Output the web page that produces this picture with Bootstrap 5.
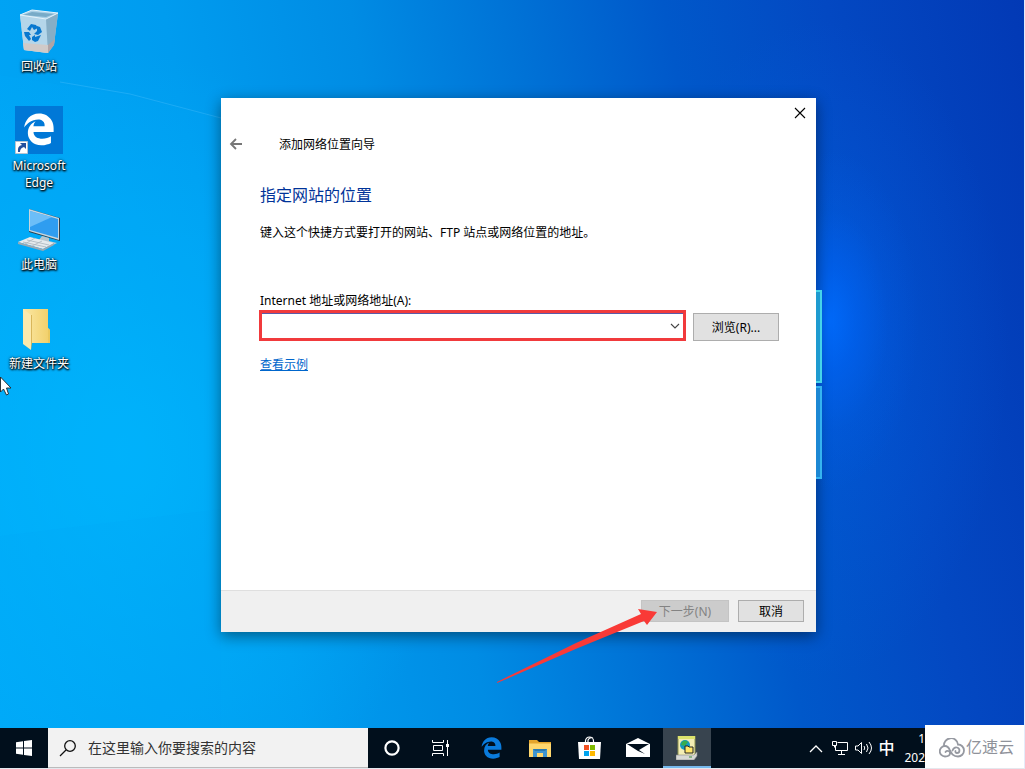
<!DOCTYPE html>
<html lang="zh-CN">
<head>
<meta charset="utf-8">
<meta name="viewport" content="width=device-width, initial-scale=1">
<title>添加网络位置向导</title>
<link href="https://cdn.jsdelivr.net/npm/bootstrap@5.3.0/dist/css/bootstrap.min.css" rel="stylesheet">
<style>
  body {
    font-family: "Noto Sans", "Noto Sans CJK SC", sans-serif;
    font-size: 12px;
    line-height: 17px;
    color: #000;
    border-right: 1px solid #e4ecfa;
    border-bottom: 1px solid #e4e8ee;
    background: #0078d7;
  }
  .wallpaper {
    background:
      radial-gradient(ellipse 90px 170px at 81% 44%, rgba(0, 108, 255, .85), rgba(0, 102, 250, .55) 30%, rgba(0, 98, 240, .18) 65%, transparent),
      radial-gradient(ellipse 190px 330px at 80% 48%, rgba(0, 98, 230, .45), transparent),
      radial-gradient(ellipse 340px 400px at 12% 62%, rgba(0, 186, 255, .7), transparent),
      linear-gradient(79deg, #00a9f8 0%, #009cef 26%, #008ce4 42%, #0072d6 56%, #0058ca 69%, #0348c2 83%, #0239b5 100%);
  }
  .wallpaper-beams { z-index: 0; }
  .desktop-icons { width: 78px; padding-top: 7px; z-index: 1; }
  .desktop-icon {
    min-height: 99px;
    color: #fff;
    text-decoration: none;
    text-shadow: 1px 1px 2px #000, 0 1px 2px #000, 0 0 3px rgba(0, 0, 0, .7);
  }
  .desktop-icon:hover { color: #fff; }
  .desktop-icon svg { margin-bottom: 3px; flex: none; }
  .pointer { left: 0; top: 376px; z-index: 3; }
  .window-area { padding: 98px 208px 96px 143px; }
  .wizard { background: #fff; box-shadow: 0 4px 14px rgba(0, 0, 0, .45); min-height: 534px; }
  .btn-plain { border: 0; background: transparent; padding: 0; line-height: 1; }
  .btn-close-window { width: 32px; height: 30px; }
  .btn-back { width: 30px; height: 32px; }
  .wizard-title { margin-left: 28px; }
  .wizard-body { padding: 24px 37px 0 39px; }
  .wizard-heading { font-size: 16px; line-height: 22px; color: #003399; margin-bottom: 18px; }
  .wizard-intro { margin-bottom: 51px; }
  .address-row { gap: 7px; margin: 1px 0 15px; }
  .address-box {
    height: 31px;
    font-size: 12px;
    padding: 0 24px 0 6px;
    margin-left: -1px;
    border: 3px solid #f13a3c;
    border-radius: 0;
    box-shadow: inset 0 1px 0 #5a5aa8;
    background-position: right 1px center;
    background-size: 14px 14px;
    background-image: url("data:image/svg+xml,%3Csvg xmlns='http://www.w3.org/2000/svg' viewBox='0 0 14 14'%3E%3Cpath d='M3 5l4 4 4-4' fill='none' stroke='%23444' stroke-width='1.1'/%3E%3C/svg%3E");
  }
  .btn-win {
    font-size: 12px;
    line-height: 17px;
    padding: 0;
    border: 1px solid #adadad;
    border-radius: 0;
    background: #e1e1e1;
    color: #000;
  }
  .btn-win:disabled { background: #ccc; border-color: #c4c4c4; color: #838383; opacity: 1; }
  .btn-browse { width: 86px; height: 28px; margin-top: 3px; flex: none; }
  .btn-next { width: 88px; height: 22px; }
  .btn-cancel { width: 66px; height: 22px; }
  .example-link { color: #0066cc; }
  .wizard-footer { background: #f0f0f0; border-top: 1px solid #dfdfdf; padding: 9px 12px 10px; gap: 9px; }
  .hint-arrow { left: -145px; top: 9px; z-index: 4; pointer-events: none; }
  .wall-panes { left: 100%; top: 192px; width: 6px; gap: 3px; }
  .wall-pane { height: 93px; border: 2px solid #45d4ea; border-left: 0; background: #1e9bd0; }
  .wall-pane + .wall-pane { border-color: #35b4f0; background: #1c88d4; }
  .taskbar { background: #010f1c; min-height: 40px; color: #fff; }
  .task-btn { width: 48px; display: flex; align-items: center; justify-content: center; }
  .task-active { background: #38444f; box-shadow: inset 0 -2px 0 #76b9ed; }
  .search-box { width: 320px; background: #f2f2f2; border-bottom: 1px solid #bbb; padding-left: 11px; gap: 11px; }
  .search-box input, .search-box input:focus { border: 0; border-radius: 0; background: transparent; padding: 0; font-size: 14px; box-shadow: none; }
  .search-box input::placeholder { color: #333; opacity: 1; }
  .app-buttons { gap: 1px; margin-left: 3px; }
  .tray { padding-right: 99px; }
  .tray .btn-plain { width: 24px; color: #fff; display: flex; align-items: center; justify-content: center; }
  .tray .ime { width: 21px; font-size: 16px; font-weight: 500; }
  .tray-clock { width: 28px; line-height: 19px; text-align: right; }
  .brand-mark { width: 99px; height: 43px; background: #fff; color: #8f929a; font-size: 16px; gap: 1px; z-index: 5; padding: 2px 0 0 4px; }
</style>
</head>
<body class="min-vh-100 d-flex flex-column overflow-hidden">

<main class="wallpaper position-relative flex-grow-1 d-flex">
  <svg class="wallpaper-beams position-absolute top-0 start-0 w-100 h-100" viewBox="0 0 1024 728" preserveAspectRatio="none" aria-hidden="true">
    <path d="M0 75 130 96 221 118V728H0z" fill="#00b4ff" opacity=".1"/>
    <path d="M0 536 221 509V728H0z" fill="#0090e8" opacity=".05"/>
    <path d="M60 82 130 94 221 118" fill="none" stroke="#5cc8ff" opacity=".3"/>
  </svg>

  <nav class="desktop-icons position-relative d-flex flex-column flex-shrink-0" aria-label="桌面">
    <a class="desktop-icon d-flex flex-column align-items-center text-center" href="#recycle">
      <svg width="48" height="48" viewBox="0 0 48 48" aria-hidden="true">
        <path d="M5 8 17 3l26 3-4 31-6 9-24-3z" fill="#a8cfe6"/>
        <path d="M5 8 31 12 33 46 9 43z" fill="#b4d6ea"/>
        <path d="M31 12 43 6 39 38 33 46z" fill="#86aec6"/>
        <path d="M8 36 33 38 33 46 9 43z" fill="#d0cac8"/><path d="M33 38 40 32 39 38 33 46z" fill="#b0a4a6"/>
        <path d="M8 8 17 5 39 7 31 10z" fill="#78abc8"/>
        <path d="M5 8 17 3l26 3-12 6z" fill="none" stroke="#e4f3fb" stroke-width="1"/>
        <g fill="#0878cf"><path d="m12 22 4-5 5 1 2 3-4 2-2-3-2 4z"/><path d="m22 19 3 1 2 5-4 3-4-1 3-3z"/><path d="m9 25 5 0 2 3-2 0 2 4-2 2-4-5z"/><path d="m17 30 3-2v2l6-2-3 6-3 1-3-2z"/></g>
      </svg>
      <span>回收站</span>
    </a>
    <a class="desktop-icon d-flex flex-column align-items-center text-center" href="#edge">
      <svg width="48" height="48" viewBox="0 0 48 48" aria-hidden="true">
        <path fill="#0078d7" d="M0 0h48v48H0z"/>
        <path transform="translate(7.500 7) scale(.064)" fill="#fff" d="M486.300 243.700c0-44-7.800-84.500-28.800-122.400C416.500 47.900 343.900 8 258.900 8 119 7.700 40.600 113.200 26.100 227.700c42.400-61.300 117-121.400 220.300-125 0 0 109.700 0 99.400 105H170c6.400-37.400 18.600-59 34.300-78.900-75 34.900-121.800 96.100-120.700 188.300.8 71.500 50.100 144.800 120.700 172 83.400 31.800 192.800 7.200 240.100-21.300V363.300C363.600 419.800 173.600 424.200 172.200 295.700h314.100z"/>
        <path fill="#fff" stroke="#b8c4d0" d="M.5 35.500h12v12H.5z"/>
        <path d="M3 46q-1-6 4-7l-2-2h6v6l-2-2q-4 1-4 5z" fill="#234f9d"/>
      </svg>
      <span>Microsoft<br>Edge</span>
    </a>
    <a class="desktop-icon d-flex flex-column align-items-center text-center" href="#computer">
      <svg width="48" height="48" viewBox="0 0 48 48" aria-hidden="true">
        <path d="m14 4 31 9v23L14 27z" fill="#2f3c48"/>
        <path d="m14 4 30 9v22L14 26z" fill="#c5d6df"/>
        <path d="m15 6 28 8v19L15 25z" fill="#2f9df0"/><path d="m15 6 22 6-22 10z" fill="#6cbef8"/>
        <path d="m27 31 7 2v3l8 2-8 4-13-3z" fill="#b9c6ce"/>
        <path d="m3 37 12-5 24 6-11 6z" fill="#e6ebee"/><path d="m3 37 25 7 11-6v2l-11 6L3 39z" fill="#9aa9b3"/>
        <path d="m8 37 23 5M12 35l22 5M10 39l10-6M17 41l10-5" stroke="#a9b5bd" stroke-width=".8"/>
      </svg>
      <span>此电脑</span>
    </a>
    <a class="desktop-icon d-flex flex-column align-items-center text-center" href="#folder">
      <svg width="48" height="48" viewBox="0 0 48 48" aria-hidden="true">
        <defs><linearGradient id="fold" x2="1"><stop stop-color="#fbe8a6"/><stop offset="1" stop-color="#f1cf68"/></linearGradient></defs>
        <path d="M8 5h25v19l2 2v13H8z" fill="url(#fold)"/>
        <path d="M33 24l2 2v13h-2z" fill="#eac85f"/>
        <path d="m8 5 8 6v35l-8-6z" fill="#fbe9ad"/><path d="m16 11 1 0v28l-1 7z" fill="#d9b65a"/>
      </svg>
      <span class="text-nowrap">新建文件夹</span>
    </a>
  </nav>

  <svg class="pointer position-absolute" width="13" height="20" viewBox="0 0 13 20" aria-hidden="true">
    <path d="M.5 1v15l3-3 3 6 2-1-2-6h4.500z" fill="#fff" stroke="#222" stroke-width=".9"/>
  </svg>

  <div class="window-area flex-grow-1 d-flex">
    <section class="wizard position-relative flex-grow-1 d-flex flex-column" aria-labelledby="wizardTitle">
      <div class="wall-panes position-absolute d-flex flex-column" aria-hidden="true">
        <div class="wall-pane"></div><div class="wall-pane"></div>
      </div>
      <div class="d-flex justify-content-end">
        <button type="button" class="btn-plain btn-close-window" aria-label="关闭">
          <svg width="12" height="12" viewBox="0 0 12 12"><path d="m1 1 10 10M11 1 1 11" stroke="#000" stroke-width="1.100"/></svg>
        </button>
      </div>
      <header class="d-flex align-items-center">
        <button type="button" class="btn-plain btn-back" aria-label="返回">
          <svg width="14" height="12" viewBox="0 0 14 12"><path d="M13 6H2M7 1 2 6l5 5" fill="none" stroke="#777" stroke-width="1.800"/></svg>
        </button>
        <span id="wizardTitle" class="wizard-title">添加网络位置向导</span>
      </header>
      <div class="wizard-body flex-grow-1">
        <h1 class="wizard-heading fw-normal">指定网站的位置</h1>
        <p class="wizard-intro">键入这个快捷方式要打开的网站、FTP 站点或网络位置的地址。</p>
        <label for="address" class="d-block">Internet 地址或网络地址(A):</label>
        <div class="address-row d-flex">
          <select id="address" class="form-select address-box"><option></option></select>
          <button type="button" class="btn btn-win btn-browse">浏览(R)...</button>
        </div>
        <a class="example-link" href="#example">查看示例</a>
      </div>
      <footer class="wizard-footer d-flex justify-content-end">
        <div class="position-relative d-flex">
          <button type="button" class="btn btn-win btn-next" disabled>下一步(N)</button>
          <svg class="hint-arrow position-absolute" width="162" height="76" viewBox="0 0 162 76" aria-hidden="true">
            <path d="M161 3 142 0 145 5 80 34 1 73V74L82 39 148 12 151 16z" fill="#f93a37"/>
          </svg>
        </div>
        <button type="button" class="btn btn-win btn-cancel">取消</button>
      </footer>
    </section>
  </div>
</main>

<footer class="taskbar position-relative d-flex align-items-stretch">
  <button type="button" class="btn-plain task-btn" aria-label="开始">
    <svg width="16" height="16" viewBox="0 0 16 16" fill="#fff"><path d="M0 2.200 7 1.200V7.500H0zM8 1.100 16 0V7.500H8zM0 8.500H7V14.800L0 13.800zM8 8.500H16V16L8 14.900z"/></svg>
  </button>
  <div class="search-box d-flex align-items-center">
    <label for="search" class="d-flex" aria-label="搜索">
      <svg width="18" height="18" viewBox="0 0 18 18" fill="none" stroke="#111" stroke-width="1.300"><circle cx="11" cy="7" r="5.300"/><path d="m7 11-6 6"/></svg>
    </label>
    <input id="search" type="text" class="form-control" placeholder="在这里输入你要搜索的内容">
  </div>
  <button type="button" class="btn-plain task-btn" aria-label="Cortana">
    <svg width="16" height="16" viewBox="0 0 16 16"><circle cx="8" cy="8" r="6.600" fill="none" stroke="#fff" stroke-width="2.200"/></svg>
  </button>
  <button type="button" class="btn-plain task-btn" aria-label="任务视图">
    <svg width="17" height="16" viewBox="0 0 17 16" fill="none" stroke="#fff"><path d="M.5 0v2.500h11V0M1.500 5.500h9v5h-9zM.5 16v-2.500h11V16M15.500 0v16"/><path fill="#fff" stroke="none" d="M14 4h3v3h-3z"/></svg>
  </button>
  <div class="app-buttons d-flex">
    <button type="button" class="btn-plain task-btn" aria-label="Microsoft Edge">
      <svg width="21" height="22" viewBox="20 0 472 512"><path fill="#0a7bdc" d="M486.300 243.700c0-44-7.800-84.500-28.800-122.400C416.500 47.900 343.900 8 258.900 8 119 7.700 40.600 113.200 26.100 227.700c42.400-61.300 117-121.400 220.300-125 0 0 109.700 0 99.400 105H170c6.400-37.400 18.600-59 34.300-78.900-75 34.900-121.800 96.100-120.700 188.300.8 71.500 50.100 144.800 120.700 172 83.400 31.800 192.800 7.200 240.100-21.300V363.300C363.600 419.800 173.600 424.200 172.200 295.700h314.100z"/></svg>
    </button>
    <button type="button" class="btn-plain task-btn" aria-label="文件资源管理器">
      <svg width="22" height="19" viewBox="0 0 22 19"><path d="M0 1h8l2 2h12v15H0z" fill="#e5a52c"/><path d="M0 4.500h22V18H0z" fill="#ffd76e"/><path d="M4 10h14v8h-4v-4H8v4H4z" fill="#3f95d0"/><path d="M4 10h14l-2 2H6z" fill="#2878b0"/></svg>
    </button>
    <button type="button" class="btn-plain task-btn" aria-label="Microsoft Store">
      <svg width="23" height="24" viewBox="0 0 23 24"><path d="M7.500 7V5a4 4 0 0 1 8 0v2M10 7V4a4 4 0 0 1 5-2" fill="none" stroke="#fff" stroke-width="1.200"/><path d="M0 6h23l-1 17H1z" fill="#fff"/><path fill="#f25022" d="M6 9h5v5H6z"/><path fill="#7fba00" d="M12 9h5v5h-5z"/><path fill="#00a4ef" d="M6 15h5v5H6z"/><path fill="#ffb900" d="M12 15h5v5h-5z"/></svg>
    </button>
    <button type="button" class="btn-plain task-btn" aria-label="邮件">
      <svg width="24" height="20" viewBox="0 0 24 20"><path d="M0 6 12 0l12 6v13H0z" fill="#fff"/><path d="M1 6h22l-10 6 6 4-7-3z" fill="#010f1c"/></svg>
    </button>
    <button type="button" class="btn-plain task-btn task-active" aria-label="添加网络位置向导">
      <svg width="22" height="24" viewBox="0 0 22 24"><path d="M2 0h17v20H2z" fill="#f3edb4" stroke="#8d9250"/><path d="M2 0h17v3H2z" fill="#dce26c"/><circle cx="9" cy="9" r="5" fill="#1599bf"/><path d="M6 6q3-3 6 0l-3 4-4-1zM8 12l4 0-2 2z" fill="#37ad4e"/><path d="M9 10h3l1 1h4v6H9z" fill="#ffe669" stroke="#222"/><path d="M0 19h18l3-3v4l-3 4H0z" fill="#d7d8d4" stroke="#888" stroke-width=".6"/><path d="M13 21h3" stroke="#3b8f3b"/></svg>
    </button>
  </div>
  <div class="tray d-flex align-items-stretch ms-auto">
    <button type="button" class="btn-plain" aria-label="显示隐藏的图标">
      <svg width="14" height="9" viewBox="0 0 14 9"><path d="m1 8 6-6 6 6" fill="none" stroke="#fff" stroke-width="1.300"/></svg>
    </button>
    <button type="button" class="btn-plain" aria-label="网络">
      <svg width="17" height="16" viewBox="0 0 17 16" fill="none" stroke="#fff"><path d="M5.500 2.500h10v8h-12V6M9.500 10.500v4M6 14.500h7M.5 1.500h4v4h-4zM2.500 5.500v2"/></svg>
    </button>
    <button type="button" class="btn-plain" aria-label="音量">
      <svg width="18" height="14" viewBox="0 0 18 14" fill="none" stroke="#fff"><path d="M.5 5H3l3.500-3.500v11L3 9H.5zM9 5q1.500 2 0 4M11.500 3q3 4 0 8M14 1q5 6 0 12"/></svg>
    </button>
    <button type="button" class="btn-plain ime" aria-label="输入法">中</button>
    <div class="tray-clock d-flex flex-column justify-content-center"><span>1</span><span>202</span></div>
  </div>
  <div class="brand-mark position-absolute end-0 bottom-0 d-flex align-items-center justify-content-center">
    <svg width="26" height="20" viewBox="0 0 26 20" fill="none" stroke="#9699a1" stroke-width="1.800" stroke-linecap="round" aria-hidden="true">
      <path d="M5 8a7 7 0 0 1 14-1.500A6 6 0 0 1 19 18.500c-5 0-6.500-3-8-6C10 10 8.500 8 6 8a5 5 0 0 0 0 10.500c3 0 5-1.500 5-3.500s-3-3-4.500-1"/>
      <path d="M13.500 12.500C14.500 10 16 9 18 9.500c3.500 1 3 5.500 0 5.500-1.200 0-2-1-1.500-2"/>
    </svg>
    <span>亿速云</span>
  </div>
</footer>

<script src="https://cdn.jsdelivr.net/npm/bootstrap@5.3.0/dist/js/bootstrap.bundle.min.js"></script>
</body>
</html>
